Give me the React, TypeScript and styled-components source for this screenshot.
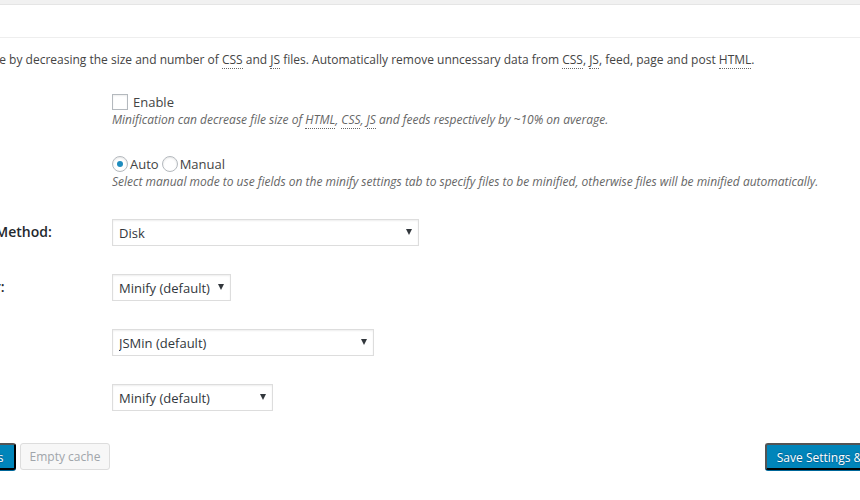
import styled, { createGlobalStyle } from "styled-components";

const GlobalStyle = createGlobalStyle`
  html, body {
    margin: 0;
    padding: 0;
    background: #f1f1f1;
    overflow: hidden;
  }
  body {
    font-family: "Open Sans", "DejaVu Sans", sans-serif;
    font-size: 13px;
    color: #444;
  }
`;

const Page = styled.div`
  width: 860px;
  height: 500px;
  overflow: hidden;
  padding-top: 4px;
  box-sizing: border-box;
`;

const Postbox = styled.div`
  margin-left: -110px;
  width: 1075px;
  min-height: 496px;
  background: #fff;
  border-top: 1px solid #e5e5e5;
  box-sizing: border-box;
`;

const Header = styled.h3`
  margin: 0;
  height: 32px;
  border-bottom: 1px solid #eee;
  padding: 0 12px;
  font-size: 14px;
  line-height: 32px;
`;

const Inside = styled.div`
  padding: 0 12px;
`;

const Intro = styled.p`
  margin: 12px 0 9px;
  padding-left: 7px;
  font-size: 12px;
  line-height: 20px;
  color: #444;
`;

const Abbr = styled.abbr`
  text-decoration: none;
  border-bottom: 1px dotted #666;
  cursor: help;
`;

const Row = styled.div`
  display: grid;
  grid-template-columns: 200px 1fr;
`;

const Label = styled.div`
  padding: 14px 10px 14px 3px;
  font-size: 14px;
  font-weight: 600;
  color: #23282d;
  line-height: 1.3;
  align-self: center;
`;

const Field = styled.div<{ $top?: number; $bottom?: number }>`
  padding: ${(p) => p.$top ?? 14}px 10px ${(p) => p.$bottom ?? 14}px;
`;

const OptionLine = styled.div`
  display: flex;
  align-items: center;
  height: 18px;
  line-height: 18px;
  color: #444;
`;

const Check = styled.input`
  appearance: none;
  margin: 0 5px 0 0;
  width: 16px;
  height: 16px;
  border: 1px solid #b4b9be;
  background: #fff;
  box-shadow: inset 0 1px 2px rgba(0, 0, 0, 0.07);
  box-sizing: border-box;
`;

const Radio = styled.input`
  appearance: none;
  margin: 0 2px 0 0;
  width: 16px;
  height: 16px;
  border: 1px solid #b4b9be;
  border-radius: 50%;
  background: #fff;
  box-shadow: inset 0 1px 2px rgba(0, 0, 0, 0.1);
  box-sizing: border-box;
  display: grid;
  place-items: center;
  &:checked::before {
    content: "";
    width: 6px;
    height: 6px;
    border-radius: 50%;
    background: #1e8cbe;
  }
`;

const RadioLabel = styled.label`
  display: inline-flex;
  align-items: center;
  margin-right: 3px;
`;

const Description = styled.div`
  font-size: 12px;
  font-style: italic;
  line-height: 18px;
  color: #666;
`;

const SelectWrap = styled.div<{ $w: number }>`
  position: relative;
  width: ${(p) => p.$w}px;
  &::after {
    content: "";
    position: absolute;
    right: 7px;
    top: 10px;
    border-left: 3px solid transparent;
    border-right: 3px solid transparent;
    border-top: 6px solid #32373c;
    pointer-events: none;
  }
`;

const Select = styled.select`
  appearance: none;
  width: 100%;
  height: 27px;
  margin: 0;
  padding: 0 20px 0 6px;
  border: 1px solid #ddd;
  border-radius: 0;
  background: #fff;
  box-shadow: inset 0 1px 2px rgba(0, 0, 0, 0.07);
  font-family: "Open Sans", "DejaVu Sans", sans-serif;
  font-size: 13px;
  color: #32373c;
  outline: none;
`;

const Footer = styled.div`
  display: flex;
  align-items: center;
  padding-top: 18px;
`;

const ButtonGroup = styled.div`
  display: flex;
  gap: 4px;
  margin-left: 1px;
`;

const Button = styled.button<{ $primary?: boolean }>`
  height: 27px;
  padding: 0 ${(p) => (p.$primary ? 10 : 9)}px;
  border-radius: 3px;
  font-family: "Open Sans", "DejaVu Sans", sans-serif;
  font-size: 12px;
  line-height: 25px;
  white-space: nowrap;
  box-sizing: border-box;
  border: 1px solid ${(p) => (p.$primary ? "#0073aa #006799 #006799" : "#ddd")};
  background: ${(p) => (p.$primary ? "#0085ba" : "#f7f7f7")};
  color: ${(p) => (p.$primary ? "#fff" : "#a0a5aa")};
  box-shadow: ${(p) => (p.$primary ? "0 1px 0 #006799" : "none")};
  text-shadow: ${(p) => (p.$primary ? "0 -1px 1px #006799, 0 1px 1px #006799" : "none")};
`;

const RightButton = styled(Button)`
  margin-left: auto;
`;

export default function App() {
  return (
    <>
      <GlobalStyle />
      <Page>
        <Postbox>
          <Header />
          <Inside>
            <Intro>
              Reduce load time by decreasing the size and number of <Abbr title="Cascading Style Sheet">CSS</Abbr> and{" "}
              <Abbr title="JavaScript">JS</Abbr> files. Automatically remove unncessary data from{" "}
              <Abbr title="Cascading Style Sheet">CSS</Abbr>, <Abbr title="JavaScript">JS</Abbr>, feed, page and post{" "}
              <Abbr title="Hypertext Markup Language">HTML</Abbr>.
            </Intro>

            <Row>
              <Label>Minify:</Label>
              <Field $bottom={12}>
                <OptionLine>
                  <Check type="checkbox" />
                  Enable
                </OptionLine>
                <Description>
                  Minification can decrease file size of <Abbr>HTML</Abbr>, <Abbr>CSS</Abbr>, <Abbr>JS</Abbr> and feeds
                  respectively by ~10% on average.
                </Description>
              </Field>
            </Row>

            <Row>
              <Label>Minify mode:</Label>
              <Field>
                <OptionLine>
                  <RadioLabel>
                    <Radio type="radio" name="mode" defaultChecked />
                    Auto
                  </RadioLabel>
                  <RadioLabel>
                    <Radio type="radio" name="mode" />
                    Manual
                  </RadioLabel>
                </OptionLine>
                <Description>
                  Select manual mode to use fields on the minify settings tab to specify files to be minified, otherwise
                  files will be minified automatically.
                </Description>
              </Field>
            </Row>

            <Row>
              <Label>Minify Cache Method:</Label>
              <Field>
                <SelectWrap $w={307}>
                  <Select defaultValue="disk">
                    <option value="disk">Disk</option>
                  </Select>
                </SelectWrap>
              </Field>
            </Row>

            <Row>
              <Label>HTML minifier:</Label>
              <Field>
                <SelectWrap $w={119}>
                  <Select>
                    <option>Minify (default)</option>
                  </Select>
                </SelectWrap>
              </Field>
            </Row>

            <Row>
              <Label>JS minifier:</Label>
              <Field>
                <SelectWrap $w={262}>
                  <Select>
                    <option>JSMin (default)</option>
                  </Select>
                </SelectWrap>
              </Field>
            </Row>

            <Row>
              <Label>CSS minifier:</Label>
              <Field>
                <SelectWrap $w={161}>
                  <Select>
                    <option>Minify (default)</option>
                  </Select>
                </SelectWrap>
              </Field>
            </Row>

            <Footer>
              <ButtonGroup>
                <Button $primary>Save all settings</Button>
                <Button disabled>Empty cache</Button>
              </ButtonGroup>
              <RightButton $primary>Save Settings &amp; Purge Caches</RightButton>
            </Footer>
          </Inside>
        </Postbox>
      </Page>
    </>
  );
}
